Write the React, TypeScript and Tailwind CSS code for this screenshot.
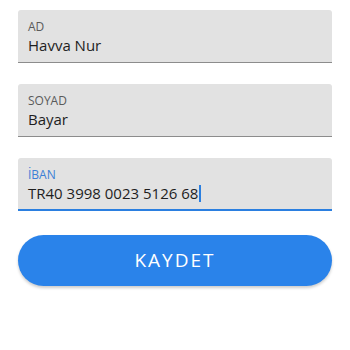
import React from 'react';

const font = { fontFamily: '"Open Sans", "Noto Sans", sans-serif' };

function Field({ label, value, active }: { label: string; value: string; active?: boolean }) {
    return (
        <div
            className={`h-[53px] bg-[#e2e2e2] rounded-t-[3px] px-[10px] pt-[10px] flex flex-col ${
                active ? 'border-b-2 border-[#2b7fe0]' : 'border-b border-[#8c8c8c]'
            }`}
        >
            <span className={`text-[12px] leading-[14px] ${active ? 'text-[#3b80d6]' : 'text-[#5a5a5a]'}`}>{label}</span>
            <span className="text-[15px] leading-[20px] text-[#1e1e1e] mt-[1px] flex items-center">
                {value}
                {active && <span className="inline-block w-[2px] h-[17px] bg-[#2b7fe0] ml-px"></span>}
            </span>
        </div>
    );
}

export default function App() {
    return (
        <div className="w-[350px] h-[350px] bg-white pt-[10px] px-[18px]" style={font}>
            <div className="flex flex-col gap-[21px]">
                <Field label="AD" value="Havva Nur" />
                <Field label="SOYAD" value="Bayar" />
                <Field label="İBAN" value="TR40 3998 0023 5126 68" active />
            </div>
            <button className="mt-[24px] w-[314px] h-[51px] rounded-full bg-[#2a83ea] text-white text-[19px] tracking-[2px] shadow-[0_2px_3px_rgba(0,0,0,0.2)]">
                KAYDET
            </button>
        </div>
    );
}
